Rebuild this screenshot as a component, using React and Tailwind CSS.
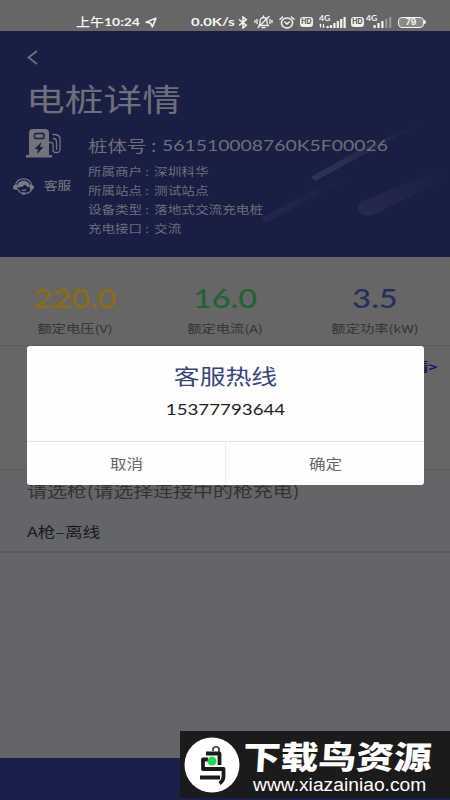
import React from 'react';

const stats = [
  { value: '220.0', label: '额定电压(V)', color: 'text-[#8c6d10]' },
  { value: '16.0', label: '额定电流(A)', color: 'text-[#226332]' },
  { value: '3.5', label: '额定功率(kW)', color: 'text-[#262d60]' },
];

const info = [
  ['所属商户', '深圳科华'],
  ['所属站点', '测试站点'],
  ['设备类型', '落地式交流充电桩'],
  ['充电接口', '交流'],
];

const Bluetooth = () => (
  <svg className="w-[10px] h-[13px]" viewBox="0 0 10 13" fill="none" stroke="currentColor" strokeWidth="1.5">
    <path d="M1 3.5 8.3 9.3 5 12V1l3.3 2.7L1 9.5" />
  </svg>
);

const Muted = () => (
  <svg className="w-[19px] h-[14px]" viewBox="0 0 19 14" fill="none" stroke="currentColor" strokeWidth="1.3" strokeLinecap="round">
    <path d="M5 10.5c1.2-1.2 1-2.4 1-4C6 4 7.500 2.500 9.500 2.500S13 4 13 6.500c0 1.600 0 2.800 1.200 4H5M8 12.700h3M4 12.500 15 1.500M3 4.500v4M1 5.500v2M16 4.500v4M18 5.500v2M9.500 1v1" />
  </svg>
);

const Alarm = () => (
  <svg className="w-[16px] h-[13px]" viewBox="0 0 16 13" fill="none" stroke="currentColor" strokeWidth="1.5" strokeLinecap="round">
    <ellipse cx="8" cy="7" rx="5.600" ry="5" />
    <path d="M5.800 6 8 8l2.200-2M1 3.300 3.600 1M15 3.300 12.400 1" />
  </svg>
);

const Hd = () => (
  <span className="w-[13px] h-[10px] rounded-[3px] bg-[#efefef] text-[#555] text-[7px] leading-[10px] font-bold text-center font-[Inter,sans-serif]">HD</span>
);

const Signal = ({ bars, level, data }) => (
  <div className="relative w-[27px] h-[14px]">
    <span className="absolute left-0 -top-[1px] text-[7.500px] leading-[9px] font-bold origin-left scale-x-[1.150] font-[Lato,sans-serif]">4G</span>
    <svg className="w-[27px] h-[14px]" viewBox="0 0 27 14" fill="currentColor">
      {data && <path d="M1.500 8.500 0 10.200h1V12.500h1v-2.300h1zM4.500 13l1.500-1.700H5V9H4v2.300H3z" />}
      {bars.map((h, i) => (
        <rect key={i} x={7.5 + i * (data ? 3.4 : 3.9)} y={13 - h} width="2.200" height={h} opacity={i < level ? 1 : 0.35} />
      ))}
    </svg>
  </div>
);

const StatusBar = () => (
  <div className="h-[31px] pt-[14px] bg-[#666] text-[#f4f4f4] flex shrink-0">
    <div className="w-[76px]" />
    <div className="w-[69px] h-4 flex text-[12px] leading-4 font-medium whitespace-nowrap">
      <span className="w-[28px] shrink-0"><span className="inline-block origin-left scale-x-[1.160]">上午</span></span>
      <span className="inline-block origin-left scale-x-[1.160] font-bold font-[Lato,sans-serif]">10:24</span>
    </div>
    <svg className="w-[12px] h-[11px] mt-[3px]" viewBox="0 0 11 10" fill="none" stroke="currentColor" strokeWidth="1.400" strokeLinejoin="round">
      <path d="M10 1 1 4.700l4 .7L6.800 9z" />
    </svg>
    <div className="w-[34px]" />
    <div className="w-[47px] h-4 text-[12px] leading-4 font-bold whitespace-nowrap font-[Lato,sans-serif]">
      <span className="inline-block origin-left scale-x-[1.240]">0.0K/s</span>
    </div>
    <div className="flex items-center h-4">
      <Bluetooth />
      <div className="w-[6px]" />
      <Muted />
      <div className="w-[6px]" />
      <Alarm />
      <div className="w-[5px]" />
      <Hd />
      <div className="w-[6px]" />
      <Signal bars={[2, 3, 5, 7, 9, 11]} level={6} data />
      <div className="w-[5px]" />
      <Hd />
      <div className="w-[2px]" />
      <Signal bars={[3, 5, 7, 9, 11]} level={3} />
      <div className="w-[5px]" />
      <span className="w-[26px] h-[11px] rounded-[4px] border-[1.5px] border-current bg-[#8a8a8a] text-[8.500px] leading-[9px] font-bold text-center font-[Inter,sans-serif]">79</span>
      <span className="w-[2px] h-[4px] bg-current rounded-r" />
    </div>
  </div>
);

const Charger = () => (
  <svg className="w-[36px] h-[29px]" viewBox="0 0 36 29" fill="none">
    <path d="M3 26V4q0-4 4-4h12q4 0 4 4v22h3v2.500H0V26z" fill="#72737b" />
    <rect x="8.500" y="4.500" width="9.500" height="5" rx="1.500" stroke="#191e42" strokeWidth="1.500" />
    <path d="M15.500 13 8.500 20H12l-1 5 6.500-7H14z" fill="#191e42" />
    <path d="M23 13.500h2q2 0 2 2V21q0 2.500 2.500 2.500H31q3 0 3-3.500V10q0-4.500-6-4.500h-1.500M27 9.500q3.500 0 3.500 3.500v8" stroke="#72737b" strokeWidth="1.300" />
  </svg>
);

const Headset = () => (
  <svg className="w-[21px] h-[17px]" viewBox="0 0 21 17" fill="none">
    <path d="M2.500 7C3.200 3 6.500.8 10.500.8S17.800 3 18.500 7" stroke="#777982" strokeWidth="1.200" />
    <path d="M4 9.500C4 4.800 7 2.800 10.500 2.800S17 4.800 17 9.500c-2.500-.3-4-1.500-5-3-1.500 2-4 3-8 3z" fill="#777982" />
    <path d="M4 6.500Q0 6.500 0 9.300T4 12zM17 6.500q4 0 4 2.800T17 12z" fill="#777982" />
    <path d="M4.500 10.500q1 3 4 4.500M18.500 11.500q-1 3.500-6.500 4M9 11.800q2 1.200 4-.3" stroke="#777982" strokeWidth="1.200" />
    <ellipse cx="10.500" cy="15.500" rx="2.200" ry="1.300" fill="#777982" />
  </svg>
);

const Header = () => (
  <div className="relative h-[226px] shrink-0 bg-[#191e44] text-[#6d6f79] overflow-hidden">
    {/* meteor streaks behind the text */}
    <svg className="absolute left-[250px] top-[85px] w-[200px] h-[125px]" viewBox="0 0 200 125">
      <defs>
        <linearGradient id="streak" x1="0" x2="1" y1="1" y2="0">
          <stop offset="0" stopColor="#393b62" stopOpacity=".7" />
          <stop offset="1" stopColor="#393b62" stopOpacity="0" />
        </linearGradient>
      </defs>
      <path d="m61 61 55-31 60-25-57 31-54 29z" fill="url(#streak)" />
      <path d="m11 102 50-27 44-17-42 24-48 25z" fill="url(#streak)" opacity=".45" />
      <path d="M110 86 185 55l10 8-70 35q-11 4-15-1-4-7 0-11z" fill="url(#streak)" opacity=".6" />
    </svg>
    <div className="relative">
      <svg className="w-[11px] h-[15px] ml-[27px] mt-[19px]" viewBox="0 0 11 15" fill="none" stroke="currentColor" strokeWidth="2">
        <path d="M10 1 1.500 7.500 10 14" />
      </svg>
      <h1 className="h-[44px] mt-[11px] ml-[26px] text-[31px] leading-[44px] whitespace-nowrap">
        <span className="inline-block origin-left scale-x-[1.250]">电桩详情</span>
      </h1>
      <div className="flex mt-[9px]">
        <div className="w-[88px] shrink-0">
          <div className="pl-[26px]"><Charger /></div>
          <div className="flex items-center pl-[13px] mt-[18px] h-[20px]">
            <Headset />
            <span className="ml-[10px] text-[11.500px] origin-left scale-x-[1.180] font-medium whitespace-nowrap">客服</span>
          </div>
        </div>
        <div className="whitespace-nowrap">
          <div className="flex h-[24px] mt-[4px] text-[16px] leading-[24px]">
            <span className="w-[74px]"><span className="inline-block origin-left scale-x-[1.220]">桩体号 :</span></span>
            <span className="inline-block origin-left scale-x-[1.210] font-[Lato,sans-serif]">561510008760K5F00026</span>
          </div>
          <div className="mt-[5px]">
            {info.map(([k, v]) => (
              <div key={k} className="flex h-[19px] text-[11px] leading-[19px]">
                <span className="w-[66px]"><span className="inline-block origin-left scale-x-[1.230]">{k} :</span></span>
                <span><span className="inline-block origin-left scale-x-[1.240]">{v}</span></span>
              </div>
            ))}
          </div>
        </div>
      </div>
    </div>
  </div>
);

const Dialog = () => (
  <div className="absolute left-[27px] top-[346px] w-[397px] h-[139px] rounded-[3px] bg-[#fefefe] flex flex-col text-center">
    <div className="h-[95px] pt-[12px]">
      <div className="h-[34px] text-[21px] leading-[34px] text-[#39457f] scale-x-[1.230]">客服热线</div>
      <div className="h-[24px] mt-[5px] text-[16px] leading-[24px] text-[#222] scale-x-[1.170] font-[Lato,sans-serif]">15377793644</div>
    </div>
    <div className="flex-1 flex border-t border-[#e4e4e4] text-[13.500px] leading-[43px] text-[#666]">
      <button className="flex-1 border-r border-[#eee]"><span className="inline-block scale-x-[1.230]">取消</span></button>
      <button className="flex-1"><span className="inline-block scale-x-[1.230]">确定</span></button>
    </div>
  </div>
);

const Watermark = () => (
  <div className="absolute left-[180px] top-[731px] w-[270px] h-[67px] bg-[#1b1b1b] text-white flex">
    <svg className="w-[56px] h-[56px] ml-[4px] mt-[6px] shrink-0" viewBox="0 0 56 56" fill="none">
      <circle cx="28" cy="28" r="27.500" fill="#fff" />
      <path d="M29 14v-2.500q3-3.500 6 0V15" stroke="#555" strokeWidth="2" />
      <path d="M22 16.500h13.500V28M24 22.500h-5V32h20.500v7q0 5-4 7.500M16 40.500h20" stroke="#1b1b1b" strokeWidth="3.800" strokeLinejoin="round" />
      <circle cx="28" cy="24" r="4.500" fill="#20d85a" />
    </svg>
    <div className="ml-[3px] whitespace-nowrap">
      <div className="h-[46px] pt-[1px] text-[32px] leading-[46px] font-black">
        <span className="inline-block origin-left -skew-x-3 scale-x-[1.180]">下载鸟资源</span>
      </div>
      <div className="h-[20px] ml-[10px] text-[17.500px] leading-[16px] font-['Liberation_Sans',sans-serif]">
        <span className="inline-block origin-left scale-x-[1.100]">www.xiazainiao.com</span>
      </div>
    </div>
  </div>
);

const App = () => {
  return (
    <div className="relative w-[450px] h-[800px] overflow-hidden bg-[#666] flex flex-col font-['Noto_Sans_CJK_SC',sans-serif]">
      <StatusBar />
      <Header />
      <div className="h-[89px] shrink-0 grid grid-cols-3 border-b border-[#5b5b5d] text-center">
        {stats.map((s) => (
          <div key={s.label} className="pt-[22px]">
            <div className={`${s.color} h-[38px] text-[27px] leading-[38px] font-medium scale-x-[1.200] font-[Lato,sans-serif]`}>{s.value}</div>
            <div className="h-[18px] mt-[2px] text-[11px] leading-[18px] text-[#343434] scale-x-[1.300]">{s.label}</div>
          </div>
        ))}
      </div>
      <div className="h-[124px] shrink-0 pt-[11px] pr-[13px] text-right text-[12.500px] leading-[20px] font-bold text-[#171364] border-b border-[#58595b]">
        <span className="inline-block origin-right scale-x-[1.200]">查看详情&gt;</span>
      </div>
      <div className="h-[83px] shrink-0 pl-[27px] bg-[#646569] border-b-2 border-[#58595b] whitespace-nowrap">
        <div className="h-[30px] mt-[5px] text-[16px] leading-[30px] text-[#323336]">
          <span className="inline-block origin-left scale-x-[1.245]">请选枪(请选择连接中的枪充电)</span>
        </div>
        <div className="h-[24px] mt-[14px] text-[13.500px] leading-[24px] text-[#18191b]">
          <span className="inline-block origin-left scale-x-[1.310]">A枪–离线</span>
        </div>
      </div>
      <div className="flex-1 bg-[#64656a]" />
      <div className="h-[42px] shrink-0 bg-[#1a1f4b]" />
      <Dialog />
      <Watermark />
    </div>
  );
};

export default App;
